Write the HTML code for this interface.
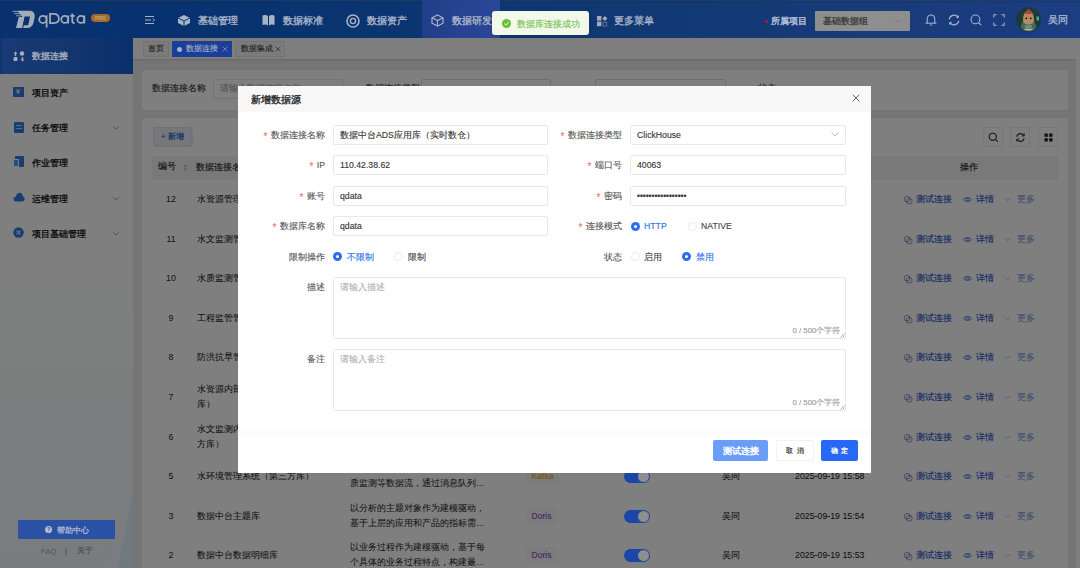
<!DOCTYPE html>
<html><head><meta charset="utf-8">
<style>
*{margin:0;padding:0;box-sizing:border-box}
html,body{width:1080px;height:568px;overflow:hidden;background:#ebebeb;font-family:"Liberation Sans",sans-serif;color:#333;-webkit-text-stroke:0.12px}
.a{position:absolute;white-space:nowrap}
#hdr{position:absolute;left:0;top:0;width:1080px;height:38px;background:linear-gradient(180deg,rgba(45,65,95,0.55) 0px,rgba(10,40,90,0.3) 2px,rgba(0,0,0,0) 3px),linear-gradient(90deg,#08316e 0%,#08336f 25%,#123a74 65%,#183b7a 80%,#1b3d82 100%);z-index:5}
.nt{position:absolute;top:14px;font-size:10.4px;line-height:14px;color:#a9b3c7;white-space:nowrap;-webkit-text-stroke:0.35px}
#side{position:absolute;left:0;top:38px;width:133px;height:530px;background:linear-gradient(180deg,#ffffff 0%,#fefefe 45%,#f4fbfb 80%,#f2f9fa 100%)}
.mi{position:absolute;left:32px;font-size:8.8px;line-height:12px;color:#111;-webkit-text-stroke:0.3px;white-space:nowrap}
.chev{position:absolute;left:113px;width:6.5px;height:4px}
#tabs{position:absolute;left:133px;top:38px;width:947px;height:21px;background:#fdfdfd;box-shadow:0 1px 2px rgba(0,0,0,0.12)}
#overlay{position:absolute;left:0;top:0;width:1080px;height:568px;background:rgba(0,0,0,0.5);z-index:3}
.card{position:absolute;background:#fff;border-radius:3px}
.modal{position:absolute;left:238px;top:86px;width:633px;height:387px;background:#fff;z-index:10}
.mh{position:absolute;left:0;top:0;width:633px;height:26px;background:#f8f8f8}
.lbl{position:absolute;font-size:8.7px;color:#555;text-align:right;white-space:nowrap;line-height:20px}
.req{color:#f0707a;margin-right:3.5px;font-size:10px;position:relative;top:1.5px}
.inp{position:absolute;height:20px;border:1px solid #e8e8e8;border-radius:2px;font-size:8.7px;line-height:18px;padding-left:6px;color:#333;background:#fff;white-space:nowrap}
#toast{position:absolute;left:492px;top:11px;width:97px;height:24px;background:#f2f9ea;border-radius:3px;z-index:20;box-shadow:0 1px 5px rgba(0,0,0,0.12)}
</style></head>
<body>
<!-- HEADER -->
<div id="hdr">
  <!-- logo -->
  <svg class="a" style="left:0;top:0" width="40" height="32" viewBox="0 0 40 32">
    <path d="M17.5 10.8H29C33.5 10.8 35.3 13.5 34.6 17.3L33.6 22.5C32.9 26 30.5 28 27 28H16L18.8 17H22.5Z" fill="#a3abb8"/>
    <path d="M24.8 16.6H30L28.2 25.3H22.9Z" fill="#08316e"/>
    <path d="M22.6 28.2L25.2 16.8" stroke="#08316e" stroke-width="1"/>
    <path d="M12.5 11.4H21M14.2 13.6H21M16 15.8H21" stroke="#a3abb8" stroke-width="0.9"/>
  </svg>
  <svg class="a" style="left:0;top:0" width="90" height="32" viewBox="0 0 90 32"><g stroke="#a3abb8" stroke-width="1.75" fill="none">
    <circle cx="42.9" cy="19.4" r="3.65"/><path d="M46.6 15.3V27.6"/>
    <path d="M50 13.9H53.6C57 13.9 58.9 16.1 58.9 18.8C58.9 21.5 57 23.1 53.6 23.1H50Z"/>
    <circle cx="64.8" cy="19.4" r="3.5"/><path d="M68.2 15.4V23.6"/>
    <path d="M72.3 13.4V21.6C72.3 22.8 72.9 23.2 74.6 23.2M70.3 15.9H74.8"/>
    <circle cx="80.9" cy="19.4" r="3.5"/><path d="M84.3 15.4V23.6"/>
  </g></svg>
  <div class="a" style="left:91px;top:13.5px;width:19px;height:8px;border-radius:4px;background:#a06c2c;font-size:5px;line-height:8px;color:#c8a068;text-align:center;font-weight:bold">PRO</div>
  <!-- menu toggle -->
  <svg class="a" style="left:145px;top:15px" width="10" height="10" viewBox="0 0 10 10"><path d="M0 1.5H9M0 5H6M0 8.5H9M8 3.5L9.5 5L8 6.5" stroke="#a9b3c7" stroke-width="1" fill="none"/></svg>
  <!-- nav items -->
  <svg class="a" style="left:177px;top:14px" width="14" height="13" viewBox="0 0 14 13"><path d="M7 1L13 4V9L7 12L1 9V4Z" fill="#a9b3c7"/><path d="M1 4L7 7L13 4M7 7V12" stroke="#08336f" stroke-width="1" fill="none"/></svg>
  <div class="nt" style="left:198px">基础管理</div>
  <svg class="a" style="left:262px;top:14px" width="13" height="12" viewBox="0 0 13 12"><path d="M0.5 1.5C2.5 0.5 4.5 0.8 6 2V11.5C4.5 10.3 2.5 10 0.5 11Z M12.5 1.5C10.5 0.5 8.5 0.8 7 2V11.5C8.5 10.3 10.5 10 12.5 11Z" fill="#a9b3c7"/></svg>
  <div class="nt" style="left:283px">数据标准</div>
  <svg class="a" style="left:346px;top:14px" width="14" height="14" viewBox="0 0 14 14"><circle cx="7" cy="7" r="6" fill="none" stroke="#a9b3c7" stroke-width="1.6"/><circle cx="7" cy="7" r="2.6" fill="none" stroke="#a9b3c7" stroke-width="1.4"/></svg>
  <div class="nt" style="left:367px">数据资产</div>
  <div class="a" style="left:422px;top:0;width:78px;height:38px;background:linear-gradient(90deg,#203e88,#2a4898)"></div>
  <svg class="a" style="left:431px;top:14px" width="13" height="13" viewBox="0 0 13 13"><path d="M6.5 1L12 3.8V9.2L6.5 12L1 9.2V3.8Z" fill="none" stroke="#a9b3c7" stroke-width="1.2"/><path d="M1 3.8L6.5 6.6L12 3.8M6.5 6.6V12" stroke="#a9b3c7" stroke-width="1.1" fill="none"/></svg>
  <div class="nt" style="left:452px">数据研发</div>
  <svg class="a" style="left:597px;top:15.5px" width="11" height="11" viewBox="0 0 11 11"><rect x="0" y="0" width="4.4" height="4.6" fill="#a6aab4"/><rect x="0" y="5.6" width="4.4" height="4.6" fill="#a6aab4"/><path d="M7.9 0.1L10.4 2.5L7.9 4.9L5.4 2.5Z" fill="#a6aab4"/><rect x="6" y="6.2" width="3.8" height="3.8" fill="none" stroke="#7f8aa0" stroke-width="0.7"/></svg>
  <div class="nt" style="left:614px">更多菜单</div>
  <!-- right -->
  <div class="a" style="left:765px;top:20px;width:3px;height:3px;border-radius:2px;background:#a8202c"></div>
  <div class="nt" style="left:771px;font-size:8.9px;color:#b0bcd6;-webkit-text-stroke:0.45px">所属项目</div>
  <div class="a" style="left:815px;top:10.5px;width:95px;height:20.5px;background:#8e8e8e;border-radius:1px"></div>
  <div class="nt" style="left:823px;top:14px;font-size:8.7px;color:#404040">基础数据组</div>
  <svg class="a" style="left:895px;top:19px" width="7" height="4" viewBox="0 0 7 4"><path d="M0.5 0.5L3.5 3.3L6.5 0.5" stroke="#777" stroke-width="0.8" fill="none"/></svg>
  <svg class="a" style="left:924px;top:13px" width="14" height="14" viewBox="0 0 14 14"><path d="M3.2 10V6.2C3.2 3.6 4.9 2 7 2C9.1 2 10.8 3.6 10.8 6.2V10" stroke="#a3b0c8" stroke-width="1.1" fill="none"/><path d="M1.6 10.2H12.4" stroke="#a3b0c8" stroke-width="1.1"/><path d="M5.8 12H8.2" stroke="#a3b0c8" stroke-width="1"/></svg>
  <svg class="a" style="left:946.5px;top:12.5px" width="14" height="14" viewBox="0 0 14 14"><path d="M2.2 6.4A4.9 4.9 0 0 1 11 4.2M11.8 7.6A4.9 4.9 0 0 1 3 9.8" stroke="#a3b0c8" stroke-width="1.1" fill="none"/><path d="M11.4 2.4V4.6H9.2M2.6 11.6V9.4H4.8" stroke="#a3b0c8" stroke-width="1" fill="none"/></svg>
  <svg class="a" style="left:969px;top:12.5px" width="14" height="14" viewBox="0 0 14 14"><circle cx="6.4" cy="6.4" r="4.4" stroke="#a3b0c8" stroke-width="1.1" fill="none"/><path d="M9.6 9.6L12.2 12.2" stroke="#a3b0c8" stroke-width="1.2"/></svg>
  <svg class="a" style="left:992px;top:12.5px" width="14" height="14" viewBox="0 0 14 14"><path d="M1.8 4.6V1.8H4.6M9.4 1.8H12.2V4.6M12.2 9.4V12.2H9.4M4.6 12.2H1.8V9.4" stroke="#a3b0c8" stroke-width="1.1" fill="none"/></svg>
  <svg class="a" style="left:1016px;top:7px" width="25" height="25" viewBox="0 0 25 25"><circle cx="12.5" cy="12.5" r="12.3" fill="#1f3a35"/><path d="M4.6 20.8C5.5 14.5 8.8 11 12.5 10.5C16.2 11 19.5 14.5 20.4 20.8A12.3 12.3 0 0 1 4.6 20.8Z" fill="#3f6a5c"/><path d="M7 13C7 7 9.5 4 12.5 3C15.5 4 18 7 18 13C18 16 15.5 17.5 12.5 17.5C9.5 17.5 7 16 7 13Z" fill="#b88a62"/><path d="M9 7C10 4 11.5 2.5 12.5 2C13.5 2.5 15 4 16 7Z" fill="#a8453a"/><circle cx="10.3" cy="11.3" r="0.9" fill="#111"/><circle cx="14.7" cy="11.3" r="0.9" fill="#111"/><rect x="9" y="18" width="7" height="3" fill="#5f8c88"/><path d="M7.2 22.6C9.5 21.2 15.5 21.2 17.8 22.6A12.3 12.3 0 0 1 7.2 22.6Z" fill="#b9a890"/><rect x="20.5" y="9.5" width="2.5" height="4" fill="#4aa88a"/></svg>
  <div class="nt" style="left:1047.5px;top:12.5px;font-size:9.8px;color:#a8b4d0">吴同</div>
</div>

<!-- SIDEBAR -->
<div id="side">
  <div class="a" style="left:0;top:0;width:133px;height:36px;background:linear-gradient(90deg,#0a3170 0px,#193a74 3px,#13366f 50%,#0a2f6a 100%);z-index:4"></div>
  <svg class="a" style="left:13px;top:13px;z-index:4" width="12" height="11" viewBox="0 0 12 11"><path d="M2.5 0.5L4.5 2.5H3.2V5H1.8V2.5H0.5Z" fill="#a5acba"/><circle cx="9" cy="2.5" r="2.2" fill="#a5acba"/><circle cx="2.5" cy="8" r="2.2" fill="#a5acba"/><path d="M9.5 10.5L7.5 8.5H8.8V6H10.2V8.5H11.5Z" fill="#a5acba"/></svg>
  <div class="mi" style="top:12px;color:#a5acba;z-index:4;-webkit-text-stroke:0.35px">数据连接</div>
  <div class="a" style="left:13px;top:49px;width:11px;height:10px;background:#2f7ae6;border-radius:1px"></div>
  <div class="a" style="left:16px;top:50px;font-size:7px;line-height:8px;color:#fff">¥</div>
  <div class="mi" style="top:48.5px">项目资产</div>
  <div class="a" style="left:14px;top:84px;width:10px;height:11px;background:#2f7ae6;border-radius:1px"></div>
  <div class="a" style="left:16px;top:87px;width:6px;height:1px;background:#bcd6fa"></div>
  <div class="a" style="left:16px;top:90px;width:6px;height:1px;background:#bcd6fa"></div>
  <div class="mi" style="top:83.5px">任务管理</div>
  <svg class="chev" style="top:88px" viewBox="0 0 8 5"><path d="M0.5 0.5L4 4L7.5 0.5" stroke="#888" stroke-width="1" fill="none"/></svg>
  <div class="a" style="left:15px;top:118px;width:9px;height:11px;background:#2f7ae6;border-radius:1px"></div>
  <div class="a" style="left:13px;top:121px;width:6px;height:8px;background:#5a9af0;border:1px solid #f7f9fb"></div>
  <div class="mi" style="top:118.5px">作业管理</div>
  <svg class="a" style="left:13px;top:154px" width="12" height="10" viewBox="0 0 12 10"><path d="M3 9.5C1 9.5 0.5 7.8 0.5 7C0.5 5.5 1.8 4.6 3 4.8C3.2 2.3 4.8 0.8 6.5 0.8C8.6 0.8 9.8 2.5 9.8 4.5C11 4.6 11.8 5.8 11.5 7.2C11.3 8.7 10 9.5 9 9.5Z" fill="#2f7ae6"/></svg>
  <div class="mi" style="top:154.5px">运维管理</div>
  <svg class="chev" style="top:159px" viewBox="0 0 8 5"><path d="M0.5 0.5L4 4L7.5 0.5" stroke="#888" stroke-width="1" fill="none"/></svg>
  <svg class="a" style="left:13px;top:189px" width="11" height="11" viewBox="0 0 11 11"><circle cx="5.5" cy="5.5" r="5.2" fill="#2f7ae6"/><path d="M3.5 3.5L7.5 7.5M7.5 3.5L3.5 7.5" stroke="#cfe0fa" stroke-width="1.2"/></svg>
  <div class="mi" style="top:189.5px">项目基础管理</div>
  <svg class="chev" style="top:194px" viewBox="0 0 8 5"><path d="M0.5 0.5L4 4L7.5 0.5" stroke="#888" stroke-width="1" fill="none"/></svg>
  <svg class="a" style="left:95px;top:420px" width="38" height="110" viewBox="0 0 38 110"><path d="M38 0V110H8C18 85 26 50 38 0Z" fill="#f2fbff" opacity="0.7"/><path d="M38 30V110H22C28 90 33 65 38 30Z" fill="#d6ecf8" opacity="0.6"/></svg>
  <div class="a" style="left:18px;top:482px;width:97px;height:19px;background:#2a51a6;border-radius:1px;z-index:4"></div>
  <div class="a" style="left:45px;top:488px;width:7px;height:7px;border-radius:4px;background:#b9bfca;z-index:4;font-size:5px;line-height:7px;text-align:center;color:#2b55ae;font-weight:bold">?</div>
  <div class="mi" style="left:57px;top:486.5px;color:#b0bad0;z-index:4;font-size:7.8px">帮助中心</div>
  <div class="mi" style="left:41px;top:507.5px;color:#aaa;font-size:7.6px;-webkit-text-stroke:0">FAQ</div>
  <div class="mi" style="left:65px;top:507px;color:#aaa;font-size:7px">|</div>
  <div class="mi" style="left:76.5px;top:507px;color:#aaa;font-size:7.6px">关于</div>
</div>

<!-- TABS -->
<div id="tabs">
  <div class="a" style="left:9.5px;top:3px;width:26px;height:16px;background:#f7f7f7;border:1px solid #e6e6e6"></div>
  <div class="a" style="left:15px;top:5px;font-size:7.6px;line-height:12px;color:#444">首页</div>
  <div class="a" style="left:38.5px;top:3px;width:60px;height:16px;background:#1a3f98;z-index:4"></div>
  <div class="a" style="left:44px;top:9px;width:4.5px;height:4.5px;border-radius:3px;background:#a8b0c4;z-index:4"></div>
  <div class="a" style="left:52.5px;top:5px;font-size:7.6px;line-height:12px;color:#a8b0c4;z-index:4">数据连接</div>
  <svg class="a" style="left:89px;top:8px;z-index:4" width="6" height="6" viewBox="0 0 6 6"><path d="M0.5 0.5L5.5 5.5M5.5 0.5L0.5 5.5" stroke="#8f9ab5" stroke-width="0.7"/></svg>
  <div class="a" style="left:102px;top:3px;width:50px;height:16px;background:#f7f7f7;border:1px solid #e6e6e6"></div>
  <div class="a" style="left:107.5px;top:5px;font-size:7.6px;line-height:12px;color:#444">数据集成</div>
  <svg class="a" style="left:141.5px;top:8px" width="6" height="6" viewBox="0 0 6 6"><path d="M0.5 0.5L5.5 5.5M5.5 0.5L0.5 5.5" stroke="#555" stroke-width="0.7"/></svg>
</div>
<!-- CONTENT -->
<div class="card" style="left:142px;top:70px;width:926px;height:40px"></div>
<div class="a" style="left:1076px;top:59px;width:4px;height:509px;background:#fcfcfc"></div>
<div class="a" style="left:152px;top:82px;font-size:8.6px;line-height:13px;color:#333">数据连接名称</div>
<div class="a" style="left:212.5px;top:79px;width:130px;height:19.5px;border:1px solid #e6e6e6;border-radius:2px"></div>
<div class="a" style="left:220px;top:82px;font-size:8.6px;line-height:13px;color:#aaa">请输入数据连接名称</div>
<div class="a" style="left:366px;top:82px;font-size:8.8px;line-height:13px;color:#444">数据连接类型</div>
<div class="a" style="left:421px;top:79px;width:130px;height:20px;border:1px solid #dcdfe6;border-radius:2px"></div>
<div class="a" style="left:595px;top:79px;width:131px;height:20px;border:1px solid #dcdfe6;border-radius:2px"></div>
<div class="a" style="left:758px;top:82px;font-size:8.8px;line-height:13px;color:#444">状态</div>
<div class="card" style="left:142px;top:118px;width:926px;height:460px"></div>
<div class="a" style="left:152.5px;top:127px;width:39.5px;height:18.5px;background:#eaeef6;border:1px solid #dde3ee;border-radius:2px;box-shadow:0.5px 0.5px 0 #d0d5de"></div>
<div class="a" style="left:161px;top:129.5px;font-size:7.8px;line-height:13px;color:#2d5fd0;-webkit-text-stroke:0.2px">+ 新增</div>
<div class="a" style="left:983px;top:127px;width:20px;height:20px;border:1px solid #ececec;border-radius:2px;background:#fff"></div>
<div class="a" style="left:1010px;top:127px;width:20px;height:20px;border:1px solid #ececec;border-radius:2px;background:#fff"></div>
<div class="a" style="left:1038px;top:127px;width:20px;height:20px;border:1px solid #ececec;border-radius:2px;background:#fff"></div>
<svg class="a" style="left:988px;top:131.5px" width="11" height="11" viewBox="0 0 11 11"><circle cx="4.8" cy="4.8" r="3.6" stroke="#333" stroke-width="1.1" fill="none"/><path d="M7.4 7.4L9.8 9.8" stroke="#333" stroke-width="1.1"/></svg>
<svg class="a" style="left:1014.5px;top:131.5px" width="11" height="11" viewBox="0 0 11 11"><path d="M1.8 4.6A3.8 3.8 0 0 1 8.8 3.5M9.2 6.4A3.8 3.8 0 0 1 2.2 7.5" stroke="#333" stroke-width="1.1" fill="none"/><path d="M9.2 1.5V3.9H6.8M1.8 9.5V7.1H4.2" stroke="#333" stroke-width="1" fill="none"/></svg>
<svg class="a" style="left:1043.5px;top:132.5px" width="9" height="9" viewBox="0 0 9 9"><rect x="0.5" y="0.5" width="3.3" height="3.3" fill="#222"/><rect x="5.2" y="0.5" width="3.3" height="3.3" fill="#222"/><rect x="0.5" y="5.2" width="3.3" height="3.3" fill="#222"/><rect x="5.2" y="5.2" width="3.3" height="3.3" fill="#222"/></svg>
<div class="a" style="left:152px;top:156px;width:906px;height:23.5px;background:#f2f2f2"></div>
<div class="a" style="left:158px;top:160px;font-size:8.8px;line-height:13px;color:#2a2a2a;-webkit-text-stroke:0.15px">编号</div>
<div class="a" style="left:196px;top:161px;font-size:8.8px;line-height:13px;color:#2a2a2a;-webkit-text-stroke:0.15px">数据连接名称</div>
<div class="a" style="left:350px;top:161px;font-size:8.8px;line-height:13px;color:#2a2a2a;-webkit-text-stroke:0.15px">描述</div>
<div class="a" style="left:526px;top:161px;font-size:8.8px;line-height:13px;color:#2a2a2a;-webkit-text-stroke:0.15px">类型</div>
<div class="a" style="left:612px;top:161px;font-size:8.8px;line-height:13px;color:#2a2a2a;-webkit-text-stroke:0.15px">状态</div>
<div class="a" style="left:722px;top:161px;font-size:8.8px;line-height:13px;color:#2a2a2a;-webkit-text-stroke:0.15px">创建人</div>
<div class="a" style="left:795px;top:161px;font-size:8.8px;line-height:13px;color:#2a2a2a;-webkit-text-stroke:0.15px">创建时间</div>
<div class="a" style="left:960px;top:161px;font-size:8.8px;line-height:13px;color:#2a2a2a;-webkit-text-stroke:0.15px">操作</div>
<svg class="a" style="left:182.5px;top:163px" width="5" height="9" viewBox="0 0 5 9"><path d="M0.6 3.6L2.5 1.4L4.4 3.6Z M0.6 5.4L2.5 7.6L4.4 5.4Z" fill="#a8a8a8"/></svg>
<div class="a" style="left:158px;top:193px;width:26px;text-align:center;font-size:8.8px;line-height:13px;color:#262626;-webkit-text-stroke:0">12</div>
<div class="a" style="left:197px;top:192px;font-size:8.8px;line-height:15px;color:#1a1a1a;-webkit-text-stroke:0.05px">水资源管理系统</div>
<div class="a" style="left:350px;top:184px;font-size:8.6px;line-height:15px;color:#2a2a2a;-webkit-text-stroke:0.05px">汇聚水利业务系统的数据，<br>通过数据同步构建…</div>
<div class="a" style="left:526px;top:191px;width:31px;height:16px;background:#f8f6fa;border-radius:2px;font-size:8.6px;line-height:16px;text-align:center;color:#8a4fc8">Doris</div>
<div class="a" style="left:624px;top:193px;width:25.5px;height:13px;border-radius:7px;background:#1b45a6;z-index:4"></div>
<div class="a" style="left:638px;top:194px;width:10.5px;height:11px;border-radius:6px;background:#8e8e8e;z-index:4"></div>
<div class="a" style="left:722px;top:192px;font-size:8.8px;line-height:15px;color:#1a1a1a;-webkit-text-stroke:0.05px">吴同</div>
<div class="a" style="left:795px;top:192px;font-size:8.8px;line-height:15px;color:#1a1a1a;-webkit-text-stroke:0.05px">2025-09-19 15:58</div>
<svg class="a" style="left:904px;top:196px" width="8.5" height="8.5" viewBox="0 0 9 9"><rect x="0.6" y="0.6" width="5.6" height="5.6" rx="2" stroke="#5a72ac" stroke-width="0.75" fill="none"/><rect x="2.8" y="2.8" width="5.6" height="5.6" rx="2" stroke="#5a72ac" stroke-width="0.75" fill="none"/></svg>
<div class="a" style="left:916px;top:192px;font-size:8.8px;line-height:15px;color:#1e50c8">测试连接</div>
<svg class="a" style="left:963px;top:196px" width="9" height="7" viewBox="0 0 9 7"><path d="M0.5 3.5C2 1 7 1 8.5 3.5C7 6 2 6 0.5 3.5Z" stroke="#3d6fe0" stroke-width="0.9" fill="none"/><circle cx="4.5" cy="3.5" r="1.3" stroke="#3d6fe0" stroke-width="0.8" fill="none"/></svg>
<div class="a" style="left:976px;top:192px;font-size:8.8px;line-height:15px;color:#1e50c8">详情</div>
<svg class="a" style="left:1004px;top:197px" width="7" height="5" viewBox="0 0 7 5"><path d="M0.5 0.8L3.5 3.8L6.5 0.8" stroke="#9fb6ea" stroke-width="0.8" fill="none"/></svg>
<div class="a" style="left:1017px;top:192px;font-size:8.8px;line-height:15px;color:#8aa6e6">更多</div>
<div class="a" style="left:158px;top:233px;width:26px;text-align:center;font-size:8.8px;line-height:13px;color:#262626;-webkit-text-stroke:0">11</div>
<div class="a" style="left:197px;top:232px;font-size:8.8px;line-height:15px;color:#1a1a1a;-webkit-text-stroke:0.05px">水文监测管理系统</div>
<div class="a" style="left:350px;top:224px;font-size:8.6px;line-height:15px;color:#2a2a2a;-webkit-text-stroke:0.05px">汇聚水利业务系统的数据，<br>通过数据同步构建…</div>
<div class="a" style="left:526px;top:231px;width:31px;height:16px;background:#f8f6fa;border-radius:2px;font-size:8.6px;line-height:16px;text-align:center;color:#8a4fc8">Doris</div>
<div class="a" style="left:624px;top:233px;width:25.5px;height:13px;border-radius:7px;background:#1b45a6;z-index:4"></div>
<div class="a" style="left:638px;top:234px;width:10.5px;height:11px;border-radius:6px;background:#8e8e8e;z-index:4"></div>
<div class="a" style="left:722px;top:232px;font-size:8.8px;line-height:15px;color:#1a1a1a;-webkit-text-stroke:0.05px">吴同</div>
<div class="a" style="left:795px;top:232px;font-size:8.8px;line-height:15px;color:#1a1a1a;-webkit-text-stroke:0.05px">2025-09-19 15:58</div>
<svg class="a" style="left:904px;top:236px" width="8.5" height="8.5" viewBox="0 0 9 9"><rect x="0.6" y="0.6" width="5.6" height="5.6" rx="2" stroke="#5a72ac" stroke-width="0.75" fill="none"/><rect x="2.8" y="2.8" width="5.6" height="5.6" rx="2" stroke="#5a72ac" stroke-width="0.75" fill="none"/></svg>
<div class="a" style="left:916px;top:232px;font-size:8.8px;line-height:15px;color:#1e50c8">测试连接</div>
<svg class="a" style="left:963px;top:236px" width="9" height="7" viewBox="0 0 9 7"><path d="M0.5 3.5C2 1 7 1 8.5 3.5C7 6 2 6 0.5 3.5Z" stroke="#3d6fe0" stroke-width="0.9" fill="none"/><circle cx="4.5" cy="3.5" r="1.3" stroke="#3d6fe0" stroke-width="0.8" fill="none"/></svg>
<div class="a" style="left:976px;top:232px;font-size:8.8px;line-height:15px;color:#1e50c8">详情</div>
<svg class="a" style="left:1004px;top:237px" width="7" height="5" viewBox="0 0 7 5"><path d="M0.5 0.8L3.5 3.8L6.5 0.8" stroke="#9fb6ea" stroke-width="0.8" fill="none"/></svg>
<div class="a" style="left:1017px;top:232px;font-size:8.8px;line-height:15px;color:#8aa6e6">更多</div>
<div class="a" style="left:158px;top:272px;width:26px;text-align:center;font-size:8.8px;line-height:13px;color:#262626;-webkit-text-stroke:0">10</div>
<div class="a" style="left:197px;top:271px;font-size:8.8px;line-height:15px;color:#1a1a1a;-webkit-text-stroke:0.05px">水质监测管理系统</div>
<div class="a" style="left:350px;top:263px;font-size:8.6px;line-height:15px;color:#2a2a2a;-webkit-text-stroke:0.05px">汇聚水利业务系统的数据，<br>通过数据同步构建…</div>
<div class="a" style="left:526px;top:270px;width:31px;height:16px;background:#f8f6fa;border-radius:2px;font-size:8.6px;line-height:16px;text-align:center;color:#8a4fc8">Doris</div>
<div class="a" style="left:624px;top:272px;width:25.5px;height:13px;border-radius:7px;background:#1b45a6;z-index:4"></div>
<div class="a" style="left:638px;top:273px;width:10.5px;height:11px;border-radius:6px;background:#8e8e8e;z-index:4"></div>
<div class="a" style="left:722px;top:271px;font-size:8.8px;line-height:15px;color:#1a1a1a;-webkit-text-stroke:0.05px">吴同</div>
<div class="a" style="left:795px;top:271px;font-size:8.8px;line-height:15px;color:#1a1a1a;-webkit-text-stroke:0.05px">2025-09-19 15:58</div>
<svg class="a" style="left:904px;top:275px" width="8.5" height="8.5" viewBox="0 0 9 9"><rect x="0.6" y="0.6" width="5.6" height="5.6" rx="2" stroke="#5a72ac" stroke-width="0.75" fill="none"/><rect x="2.8" y="2.8" width="5.6" height="5.6" rx="2" stroke="#5a72ac" stroke-width="0.75" fill="none"/></svg>
<div class="a" style="left:916px;top:271px;font-size:8.8px;line-height:15px;color:#1e50c8">测试连接</div>
<svg class="a" style="left:963px;top:275px" width="9" height="7" viewBox="0 0 9 7"><path d="M0.5 3.5C2 1 7 1 8.5 3.5C7 6 2 6 0.5 3.5Z" stroke="#3d6fe0" stroke-width="0.9" fill="none"/><circle cx="4.5" cy="3.5" r="1.3" stroke="#3d6fe0" stroke-width="0.8" fill="none"/></svg>
<div class="a" style="left:976px;top:271px;font-size:8.8px;line-height:15px;color:#1e50c8">详情</div>
<svg class="a" style="left:1004px;top:276px" width="7" height="5" viewBox="0 0 7 5"><path d="M0.5 0.8L3.5 3.8L6.5 0.8" stroke="#9fb6ea" stroke-width="0.8" fill="none"/></svg>
<div class="a" style="left:1017px;top:271px;font-size:8.8px;line-height:15px;color:#8aa6e6">更多</div>
<div class="a" style="left:158px;top:312px;width:26px;text-align:center;font-size:8.8px;line-height:13px;color:#262626;-webkit-text-stroke:0">9</div>
<div class="a" style="left:197px;top:311px;font-size:8.8px;line-height:15px;color:#1a1a1a;-webkit-text-stroke:0.05px">工程监管管理系统</div>
<div class="a" style="left:350px;top:303px;font-size:8.6px;line-height:15px;color:#2a2a2a;-webkit-text-stroke:0.05px">汇聚水利业务系统的数据，<br>通过数据同步构建…</div>
<div class="a" style="left:526px;top:310px;width:31px;height:16px;background:#f8f6fa;border-radius:2px;font-size:8.6px;line-height:16px;text-align:center;color:#8a4fc8">Doris</div>
<div class="a" style="left:624px;top:312px;width:25.5px;height:13px;border-radius:7px;background:#1b45a6;z-index:4"></div>
<div class="a" style="left:638px;top:313px;width:10.5px;height:11px;border-radius:6px;background:#8e8e8e;z-index:4"></div>
<div class="a" style="left:722px;top:311px;font-size:8.8px;line-height:15px;color:#1a1a1a;-webkit-text-stroke:0.05px">吴同</div>
<div class="a" style="left:795px;top:311px;font-size:8.8px;line-height:15px;color:#1a1a1a;-webkit-text-stroke:0.05px">2025-09-19 15:58</div>
<svg class="a" style="left:904px;top:315px" width="8.5" height="8.5" viewBox="0 0 9 9"><rect x="0.6" y="0.6" width="5.6" height="5.6" rx="2" stroke="#5a72ac" stroke-width="0.75" fill="none"/><rect x="2.8" y="2.8" width="5.6" height="5.6" rx="2" stroke="#5a72ac" stroke-width="0.75" fill="none"/></svg>
<div class="a" style="left:916px;top:311px;font-size:8.8px;line-height:15px;color:#1e50c8">测试连接</div>
<svg class="a" style="left:963px;top:315px" width="9" height="7" viewBox="0 0 9 7"><path d="M0.5 3.5C2 1 7 1 8.5 3.5C7 6 2 6 0.5 3.5Z" stroke="#3d6fe0" stroke-width="0.9" fill="none"/><circle cx="4.5" cy="3.5" r="1.3" stroke="#3d6fe0" stroke-width="0.8" fill="none"/></svg>
<div class="a" style="left:976px;top:311px;font-size:8.8px;line-height:15px;color:#1e50c8">详情</div>
<svg class="a" style="left:1004px;top:316px" width="7" height="5" viewBox="0 0 7 5"><path d="M0.5 0.8L3.5 3.8L6.5 0.8" stroke="#9fb6ea" stroke-width="0.8" fill="none"/></svg>
<div class="a" style="left:1017px;top:311px;font-size:8.8px;line-height:15px;color:#8aa6e6">更多</div>
<div class="a" style="left:158px;top:351px;width:26px;text-align:center;font-size:8.8px;line-height:13px;color:#262626;-webkit-text-stroke:0">8</div>
<div class="a" style="left:197px;top:350px;font-size:8.8px;line-height:15px;color:#1a1a1a;-webkit-text-stroke:0.05px">防洪抗旱管理系统</div>
<div class="a" style="left:350px;top:342px;font-size:8.6px;line-height:15px;color:#2a2a2a;-webkit-text-stroke:0.05px">汇聚水利业务系统的数据，<br>通过数据同步构建…</div>
<div class="a" style="left:526px;top:349px;width:31px;height:16px;background:#f8f6fa;border-radius:2px;font-size:8.6px;line-height:16px;text-align:center;color:#8a4fc8">Doris</div>
<div class="a" style="left:624px;top:351px;width:25.5px;height:13px;border-radius:7px;background:#1b45a6;z-index:4"></div>
<div class="a" style="left:638px;top:352px;width:10.5px;height:11px;border-radius:6px;background:#8e8e8e;z-index:4"></div>
<div class="a" style="left:722px;top:350px;font-size:8.8px;line-height:15px;color:#1a1a1a;-webkit-text-stroke:0.05px">吴同</div>
<div class="a" style="left:795px;top:350px;font-size:8.8px;line-height:15px;color:#1a1a1a;-webkit-text-stroke:0.05px">2025-09-19 15:58</div>
<svg class="a" style="left:904px;top:354px" width="8.5" height="8.5" viewBox="0 0 9 9"><rect x="0.6" y="0.6" width="5.6" height="5.6" rx="2" stroke="#5a72ac" stroke-width="0.75" fill="none"/><rect x="2.8" y="2.8" width="5.6" height="5.6" rx="2" stroke="#5a72ac" stroke-width="0.75" fill="none"/></svg>
<div class="a" style="left:916px;top:350px;font-size:8.8px;line-height:15px;color:#1e50c8">测试连接</div>
<svg class="a" style="left:963px;top:354px" width="9" height="7" viewBox="0 0 9 7"><path d="M0.5 3.5C2 1 7 1 8.5 3.5C7 6 2 6 0.5 3.5Z" stroke="#3d6fe0" stroke-width="0.9" fill="none"/><circle cx="4.5" cy="3.5" r="1.3" stroke="#3d6fe0" stroke-width="0.8" fill="none"/></svg>
<div class="a" style="left:976px;top:350px;font-size:8.8px;line-height:15px;color:#1e50c8">详情</div>
<svg class="a" style="left:1004px;top:355px" width="7" height="5" viewBox="0 0 7 5"><path d="M0.5 0.8L3.5 3.8L6.5 0.8" stroke="#9fb6ea" stroke-width="0.8" fill="none"/></svg>
<div class="a" style="left:1017px;top:350px;font-size:8.8px;line-height:15px;color:#8aa6e6">更多</div>
<div class="a" style="left:158px;top:391px;width:26px;text-align:center;font-size:8.8px;line-height:13px;color:#262626;-webkit-text-stroke:0">7</div>
<div class="a" style="left:197px;top:382px;font-size:8.8px;line-height:15px;color:#1a1a1a;-webkit-text-stroke:0.05px">水资源内部数据（第三方<br>库）</div>
<div class="a" style="left:350px;top:382px;font-size:8.6px;line-height:15px;color:#2a2a2a;-webkit-text-stroke:0.05px">汇聚水利业务系统的数据，<br>通过数据同步构建…</div>
<div class="a" style="left:526px;top:389px;width:31px;height:16px;background:#f8f6fa;border-radius:2px;font-size:8.6px;line-height:16px;text-align:center;color:#8a4fc8">Doris</div>
<div class="a" style="left:624px;top:391px;width:25.5px;height:13px;border-radius:7px;background:#1b45a6;z-index:4"></div>
<div class="a" style="left:638px;top:392px;width:10.5px;height:11px;border-radius:6px;background:#8e8e8e;z-index:4"></div>
<div class="a" style="left:722px;top:390px;font-size:8.8px;line-height:15px;color:#1a1a1a;-webkit-text-stroke:0.05px">吴同</div>
<div class="a" style="left:795px;top:390px;font-size:8.8px;line-height:15px;color:#1a1a1a;-webkit-text-stroke:0.05px">2025-09-19 15:58</div>
<svg class="a" style="left:904px;top:394px" width="8.5" height="8.5" viewBox="0 0 9 9"><rect x="0.6" y="0.6" width="5.6" height="5.6" rx="2" stroke="#5a72ac" stroke-width="0.75" fill="none"/><rect x="2.8" y="2.8" width="5.6" height="5.6" rx="2" stroke="#5a72ac" stroke-width="0.75" fill="none"/></svg>
<div class="a" style="left:916px;top:390px;font-size:8.8px;line-height:15px;color:#1e50c8">测试连接</div>
<svg class="a" style="left:963px;top:394px" width="9" height="7" viewBox="0 0 9 7"><path d="M0.5 3.5C2 1 7 1 8.5 3.5C7 6 2 6 0.5 3.5Z" stroke="#3d6fe0" stroke-width="0.9" fill="none"/><circle cx="4.5" cy="3.5" r="1.3" stroke="#3d6fe0" stroke-width="0.8" fill="none"/></svg>
<div class="a" style="left:976px;top:390px;font-size:8.8px;line-height:15px;color:#1e50c8">详情</div>
<svg class="a" style="left:1004px;top:395px" width="7" height="5" viewBox="0 0 7 5"><path d="M0.5 0.8L3.5 3.8L6.5 0.8" stroke="#9fb6ea" stroke-width="0.8" fill="none"/></svg>
<div class="a" style="left:1017px;top:390px;font-size:8.8px;line-height:15px;color:#8aa6e6">更多</div>
<div class="a" style="left:158px;top:431px;width:26px;text-align:center;font-size:8.8px;line-height:13px;color:#262626;-webkit-text-stroke:0">6</div>
<div class="a" style="left:197px;top:422px;font-size:8.8px;line-height:15px;color:#1a1a1a;-webkit-text-stroke:0.05px">水文监测内部数据（第三<br>方库）</div>
<div class="a" style="left:350px;top:422px;font-size:8.6px;line-height:15px;color:#2a2a2a;-webkit-text-stroke:0.05px">汇聚水利业务系统的数据，<br>通过数据同步构建…</div>
<div class="a" style="left:526px;top:429px;width:31px;height:16px;background:#f8f6fa;border-radius:2px;font-size:8.6px;line-height:16px;text-align:center;color:#8a4fc8">Doris</div>
<div class="a" style="left:624px;top:431px;width:25.5px;height:13px;border-radius:7px;background:#1b45a6;z-index:4"></div>
<div class="a" style="left:638px;top:432px;width:10.5px;height:11px;border-radius:6px;background:#8e8e8e;z-index:4"></div>
<div class="a" style="left:722px;top:430px;font-size:8.8px;line-height:15px;color:#1a1a1a;-webkit-text-stroke:0.05px">吴同</div>
<div class="a" style="left:795px;top:430px;font-size:8.8px;line-height:15px;color:#1a1a1a;-webkit-text-stroke:0.05px">2025-09-19 15:58</div>
<svg class="a" style="left:904px;top:434px" width="8.5" height="8.5" viewBox="0 0 9 9"><rect x="0.6" y="0.6" width="5.6" height="5.6" rx="2" stroke="#5a72ac" stroke-width="0.75" fill="none"/><rect x="2.8" y="2.8" width="5.6" height="5.6" rx="2" stroke="#5a72ac" stroke-width="0.75" fill="none"/></svg>
<div class="a" style="left:916px;top:430px;font-size:8.8px;line-height:15px;color:#1e50c8">测试连接</div>
<svg class="a" style="left:963px;top:434px" width="9" height="7" viewBox="0 0 9 7"><path d="M0.5 3.5C2 1 7 1 8.5 3.5C7 6 2 6 0.5 3.5Z" stroke="#3d6fe0" stroke-width="0.9" fill="none"/><circle cx="4.5" cy="3.5" r="1.3" stroke="#3d6fe0" stroke-width="0.8" fill="none"/></svg>
<div class="a" style="left:976px;top:430px;font-size:8.8px;line-height:15px;color:#1e50c8">详情</div>
<svg class="a" style="left:1004px;top:435px" width="7" height="5" viewBox="0 0 7 5"><path d="M0.5 0.8L3.5 3.8L6.5 0.8" stroke="#9fb6ea" stroke-width="0.8" fill="none"/></svg>
<div class="a" style="left:1017px;top:430px;font-size:8.8px;line-height:15px;color:#8aa6e6">更多</div>
<div class="a" style="left:158px;top:470px;width:26px;text-align:center;font-size:8.8px;line-height:13px;color:#262626;-webkit-text-stroke:0">5</div>
<div class="a" style="left:197px;top:469px;font-size:8.8px;line-height:15px;color:#1a1a1a;-webkit-text-stroke:0.05px">水环境管理系统（第三方库）</div>
<div class="a" style="left:350px;top:461px;font-size:8.6px;line-height:15px;color:#2a2a2a;-webkit-text-stroke:0.05px">汇聚水环境管理系统的水<br>质监测等数据流，通过消息队列…</div>
<div class="a" style="left:526px;top:468px;width:33px;height:16px;background:#fbf8f3;border-radius:2px;font-size:8.6px;line-height:16px;text-align:center;color:#e8a838">Kafka</div>
<div class="a" style="left:624px;top:470px;width:25.5px;height:13px;border-radius:7px;background:#1b45a6;z-index:4"></div>
<div class="a" style="left:638px;top:471px;width:10.5px;height:11px;border-radius:6px;background:#8e8e8e;z-index:4"></div>
<div class="a" style="left:722px;top:469px;font-size:8.8px;line-height:15px;color:#1a1a1a;-webkit-text-stroke:0.05px">吴同</div>
<div class="a" style="left:795px;top:469px;font-size:8.8px;line-height:15px;color:#1a1a1a;-webkit-text-stroke:0.05px">2025-09-19 15:58</div>
<svg class="a" style="left:904px;top:473px" width="8.5" height="8.5" viewBox="0 0 9 9"><rect x="0.6" y="0.6" width="5.6" height="5.6" rx="2" stroke="#5a72ac" stroke-width="0.75" fill="none"/><rect x="2.8" y="2.8" width="5.6" height="5.6" rx="2" stroke="#5a72ac" stroke-width="0.75" fill="none"/></svg>
<div class="a" style="left:916px;top:469px;font-size:8.8px;line-height:15px;color:#1e50c8">测试连接</div>
<svg class="a" style="left:963px;top:473px" width="9" height="7" viewBox="0 0 9 7"><path d="M0.5 3.5C2 1 7 1 8.5 3.5C7 6 2 6 0.5 3.5Z" stroke="#3d6fe0" stroke-width="0.9" fill="none"/><circle cx="4.5" cy="3.5" r="1.3" stroke="#3d6fe0" stroke-width="0.8" fill="none"/></svg>
<div class="a" style="left:976px;top:469px;font-size:8.8px;line-height:15px;color:#1e50c8">详情</div>
<svg class="a" style="left:1004px;top:474px" width="7" height="5" viewBox="0 0 7 5"><path d="M0.5 0.8L3.5 3.8L6.5 0.8" stroke="#9fb6ea" stroke-width="0.8" fill="none"/></svg>
<div class="a" style="left:1017px;top:469px;font-size:8.8px;line-height:15px;color:#8aa6e6">更多</div>
<div class="a" style="left:158px;top:510px;width:26px;text-align:center;font-size:8.8px;line-height:13px;color:#262626;-webkit-text-stroke:0">3</div>
<div class="a" style="left:197px;top:509px;font-size:8.8px;line-height:15px;color:#1a1a1a;-webkit-text-stroke:0.05px">数据中台主题库</div>
<div class="a" style="left:350px;top:501px;font-size:8.6px;line-height:15px;color:#2a2a2a;-webkit-text-stroke:0.05px">以分析的主题对象作为建模驱动，<br>基于上层的应用和产品的指标需…</div>
<div class="a" style="left:526px;top:508px;width:31px;height:16px;background:#f8f6fa;border-radius:2px;font-size:8.6px;line-height:16px;text-align:center;color:#8a4fc8">Doris</div>
<div class="a" style="left:624px;top:510px;width:25.5px;height:13px;border-radius:7px;background:#1b45a6;z-index:4"></div>
<div class="a" style="left:638px;top:511px;width:10.5px;height:11px;border-radius:6px;background:#8e8e8e;z-index:4"></div>
<div class="a" style="left:722px;top:509px;font-size:8.8px;line-height:15px;color:#1a1a1a;-webkit-text-stroke:0.05px">吴同</div>
<div class="a" style="left:795px;top:509px;font-size:8.8px;line-height:15px;color:#1a1a1a;-webkit-text-stroke:0.05px">2025-09-19 15:54</div>
<svg class="a" style="left:904px;top:513px" width="8.5" height="8.5" viewBox="0 0 9 9"><rect x="0.6" y="0.6" width="5.6" height="5.6" rx="2" stroke="#5a72ac" stroke-width="0.75" fill="none"/><rect x="2.8" y="2.8" width="5.6" height="5.6" rx="2" stroke="#5a72ac" stroke-width="0.75" fill="none"/></svg>
<div class="a" style="left:916px;top:509px;font-size:8.8px;line-height:15px;color:#1e50c8">测试连接</div>
<svg class="a" style="left:963px;top:513px" width="9" height="7" viewBox="0 0 9 7"><path d="M0.5 3.5C2 1 7 1 8.5 3.5C7 6 2 6 0.5 3.5Z" stroke="#3d6fe0" stroke-width="0.9" fill="none"/><circle cx="4.5" cy="3.5" r="1.3" stroke="#3d6fe0" stroke-width="0.8" fill="none"/></svg>
<div class="a" style="left:976px;top:509px;font-size:8.8px;line-height:15px;color:#1e50c8">详情</div>
<svg class="a" style="left:1004px;top:514px" width="7" height="5" viewBox="0 0 7 5"><path d="M0.5 0.8L3.5 3.8L6.5 0.8" stroke="#9fb6ea" stroke-width="0.8" fill="none"/></svg>
<div class="a" style="left:1017px;top:509px;font-size:8.8px;line-height:15px;color:#8aa6e6">更多</div>
<div class="a" style="left:158px;top:549px;width:26px;text-align:center;font-size:8.8px;line-height:13px;color:#262626;-webkit-text-stroke:0">2</div>
<div class="a" style="left:197px;top:548px;font-size:8.8px;line-height:15px;color:#1a1a1a;-webkit-text-stroke:0.05px">数据中台数据明细库</div>
<div class="a" style="left:350px;top:540px;font-size:8.6px;line-height:15px;color:#2a2a2a;-webkit-text-stroke:0.05px">以业务过程作为建模驱动，基于每<br>个具体的业务过程特点，构建最…</div>
<div class="a" style="left:526px;top:547px;width:31px;height:16px;background:#f8f6fa;border-radius:2px;font-size:8.6px;line-height:16px;text-align:center;color:#8a4fc8">Doris</div>
<div class="a" style="left:624px;top:549px;width:25.5px;height:13px;border-radius:7px;background:#1b45a6;z-index:4"></div>
<div class="a" style="left:638px;top:550px;width:10.5px;height:11px;border-radius:6px;background:#8e8e8e;z-index:4"></div>
<div class="a" style="left:722px;top:548px;font-size:8.8px;line-height:15px;color:#1a1a1a;-webkit-text-stroke:0.05px">吴同</div>
<div class="a" style="left:795px;top:548px;font-size:8.8px;line-height:15px;color:#1a1a1a;-webkit-text-stroke:0.05px">2025-09-19 15:53</div>
<svg class="a" style="left:904px;top:552px" width="8.5" height="8.5" viewBox="0 0 9 9"><rect x="0.6" y="0.6" width="5.6" height="5.6" rx="2" stroke="#5a72ac" stroke-width="0.75" fill="none"/><rect x="2.8" y="2.8" width="5.6" height="5.6" rx="2" stroke="#5a72ac" stroke-width="0.75" fill="none"/></svg>
<div class="a" style="left:916px;top:548px;font-size:8.8px;line-height:15px;color:#1e50c8">测试连接</div>
<svg class="a" style="left:963px;top:552px" width="9" height="7" viewBox="0 0 9 7"><path d="M0.5 3.5C2 1 7 1 8.5 3.5C7 6 2 6 0.5 3.5Z" stroke="#3d6fe0" stroke-width="0.9" fill="none"/><circle cx="4.5" cy="3.5" r="1.3" stroke="#3d6fe0" stroke-width="0.8" fill="none"/></svg>
<div class="a" style="left:976px;top:548px;font-size:8.8px;line-height:15px;color:#1e50c8">详情</div>
<svg class="a" style="left:1004px;top:553px" width="7" height="5" viewBox="0 0 7 5"><path d="M0.5 0.8L3.5 3.8L6.5 0.8" stroke="#9fb6ea" stroke-width="0.8" fill="none"/></svg>
<div class="a" style="left:1017px;top:548px;font-size:8.8px;line-height:15px;color:#8aa6e6">更多</div>
<div id="overlay"></div>
<!-- MODAL (coords relative to 238,86) -->
<div class="modal">
  <div class="mh"></div>
  <div class="a" style="left:12.5px;top:6.5px;font-size:10.1px;line-height:14px;color:#2a2a2a;-webkit-text-stroke:0.35px">新增数据源</div>
  <svg class="a" style="left:614px;top:8px" width="8" height="8" viewBox="0 0 8 8"><path d="M0.8 0.8L7.2 7.2M7.2 0.8L0.8 7.2" stroke="#555" stroke-width="0.9"/></svg>
  <div class="lbl" style="right:546px;top:39px"><span class="req">*</span>数据连接名称</div>
  <div class="inp" style="left:95px;top:39px;width:215px">数据中台ADS应用库（实时数仓）</div>
  <div class="lbl" style="right:249px;top:39px"><span class="req">*</span>数据连接类型</div>
  <div class="inp" style="left:392px;top:39px;width:216px">ClickHouse</div>
  <svg class="a" style="left:593px;top:46px" width="8" height="5" viewBox="0 0 8 5"><path d="M0.5 0.5L4 4L7.5 0.5" stroke="#aaa" stroke-width="0.8" fill="none"/></svg>
  <div class="lbl" style="right:546px;top:69px"><span class="req">*</span>IP</div>
  <div class="inp" style="left:95px;top:69px;width:215px">110.42.38.62</div>
  <div class="lbl" style="right:249px;top:69px"><span class="req">*</span>端口号</div>
  <div class="inp" style="left:392px;top:69px;width:216px">40063</div>
  <div class="lbl" style="right:546px;top:100px"><span class="req">*</span>账号</div>
  <div class="inp" style="left:95px;top:100px;width:215px">qdata</div>
  <div class="lbl" style="right:249px;top:100px"><span class="req">*</span>密码</div>
  <div class="inp" style="left:392px;top:100px;width:216px"><span style="font-size:8.3px">•••••••••••••••••</span></div>
  <div class="lbl" style="right:546px;top:130px"><span class="req">*</span>数据库名称</div>
  <div class="inp" style="left:95px;top:130px;width:215px">qdata</div>
  <div class="lbl" style="right:249px;top:130px"><span class="req">*</span>连接模式</div>
  <div class="a" style="left:392.5px;top:135.5px;width:9px;height:9px;border-radius:50%;background:#2b6ef0"></div><div class="a" style="left:395.5px;top:138.5px;width:3px;height:3px;border-radius:50%;background:#fff"></div>
  <div class="a" style="left:406px;top:133px;font-size:8.7px;line-height:14px;color:#2b6ef0">HTTP</div>
  <div class="a" style="left:449.5px;top:135.5px;width:9px;height:9px;border-radius:50%;border:1px solid #ececec;background:#fff"></div>
  <div class="a" style="left:463px;top:133px;font-size:8.7px;line-height:14px;color:#444">NATIVE</div>
  <div class="lbl" style="right:546px;top:160.5px">限制操作</div>
  <div class="a" style="left:95.0px;top:166.0px;width:9px;height:9px;border-radius:50%;background:#2b6ef0"></div><div class="a" style="left:98.0px;top:169.0px;width:3px;height:3px;border-radius:50%;background:#fff"></div>
  <div class="a" style="left:109px;top:163.5px;font-size:8.7px;line-height:14px;color:#2b6ef0">不限制</div>
  <div class="a" style="left:155.5px;top:166.0px;width:9px;height:9px;border-radius:50%;border:1px solid #ececec;background:#fff"></div>
  <div class="a" style="left:170px;top:163.5px;font-size:8.7px;line-height:14px;color:#444">限制</div>
  <div class="lbl" style="right:249px;top:160.5px">状态</div>
  <div class="a" style="left:392.5px;top:166.0px;width:9px;height:9px;border-radius:50%;border:1px solid #ececec;background:#fff"></div>
  <div class="a" style="left:406px;top:163.5px;font-size:8.7px;line-height:14px;color:#444">启用</div>
  <div class="a" style="left:443.5px;top:166.0px;width:9px;height:9px;border-radius:50%;background:#2b6ef0"></div><div class="a" style="left:446.5px;top:169.0px;width:3px;height:3px;border-radius:50%;background:#fff"></div>
  <div class="a" style="left:458px;top:163.5px;font-size:8.7px;line-height:14px;color:#2b6ef0">禁用</div>
  <div class="lbl" style="right:546px;top:191px">描述</div>
  <div class="a" style="left:95px;top:191px;width:513px;height:62px;border:1px solid #e8e8e8;border-radius:2px"></div>
  <div class="a" style="left:102px;top:194px;font-size:8.7px;line-height:14px;color:#b0b0b0">请输入描述</div>
  <div class="a" style="left:554.5px;top:239.5px;font-size:7.8px;line-height:10px;color:#999">0 / 500个字符</div>
  <svg class="a" style="left:602px;top:247px" width="5" height="5" viewBox="0 0 5 5"><path d="M4.5 0.5L0.5 4.5M4.5 2.5L2.5 4.5" stroke="#777" stroke-width="0.6"/></svg>
  <div class="lbl" style="right:546px;top:263px">备注</div>
  <div class="a" style="left:95px;top:263px;width:513px;height:62px;border:1px solid #e8e8e8;border-radius:2px"></div>
  <div class="a" style="left:102px;top:266px;font-size:8.7px;line-height:14px;color:#b0b0b0">请输入备注</div>
  <div class="a" style="left:554.5px;top:311.5px;font-size:7.8px;line-height:10px;color:#999">0 / 500个字符</div>
  <svg class="a" style="left:602px;top:319px" width="5" height="5" viewBox="0 0 5 5"><path d="M4.5 0.5L0.5 4.5M4.5 2.5L2.5 4.5" stroke="#777" stroke-width="0.6"/></svg>
  <div class="a" style="left:0;top:344px;width:633px;height:6px;background:#fcfcfc"></div>
  <div class="a" style="left:475px;top:354px;width:55px;height:20.5px;background:#6a9df8;border-radius:2px;font-size:8.8px;line-height:22px;text-align:center;color:#fff;-webkit-text-stroke:0.4px">测试连接</div>
  <div class="a" style="left:538px;top:354px;width:38px;height:20.5px;background:#fff;border:1px solid #f2f2f2;border-radius:2px;font-size:7.4px;line-height:20px;text-align:center;color:#333;letter-spacing:3.5px;text-indent:3.5px;-webkit-text-stroke:0.2px">取消</div>
  <div class="a" style="left:583px;top:354px;width:37px;height:20.5px;background:#2868f6;border-radius:2px;font-size:7.4px;line-height:22px;text-align:center;color:#fff;letter-spacing:3.5px;text-indent:3.5px;-webkit-text-stroke:0.25px">确定</div>
</div>
<!-- TOAST -->
<div id="toast">
  <svg class="a" style="left:10px;top:7.5px" width="9" height="9" viewBox="0 0 9 9"><circle cx="4.5" cy="4.5" r="4.5" fill="#67c23a"/><path d="M2.4 4.6L3.9 6L6.6 3.2" stroke="#fff" stroke-width="1" fill="none"/></svg>
  <div class="a" style="left:25px;top:5.5px;font-size:8.7px;line-height:14px;color:#7cc255;-webkit-text-stroke:0.15px">数据库连接成功</div>
</div>
</body></html>
